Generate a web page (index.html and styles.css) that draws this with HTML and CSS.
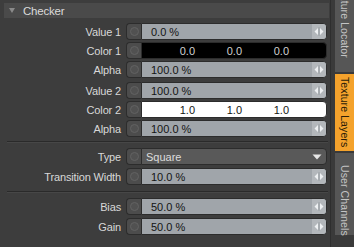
FILE: index.html
```html
<!DOCTYPE html>
<html>
<head>
<meta charset="utf-8">
<link rel="stylesheet" href="styles.css">
</head>
<body>
<div class="app">
  <div class="panel">
    <div class="header"><span class="tri"></span><span class="title">Checker</span></div>
    <div class="group">
      <div class="row"><div class="label">Value 1</div><div class="ctrl"><div class="key"><span class="dot"></span></div><div class="field"><span class="val">0.0 %</span><span class="arrows"><svg width="14" height="15" viewBox="0 0 14 15"><path d="M6 4 L2.5 7.5 L6 11 Z M8 4 L11.5 7.5 L8 11 Z" fill="#eef0f2"/><path d="M7 3 V12" stroke="#9aa0a5" stroke-width="1"/></svg></span></div></div></div>
      <div class="row"><div class="label">Color 1</div><div class="ctrl"><div class="key"><span class="dot"></span></div><div class="field color black"><span class="c">0.0</span><span class="c">0.0</span><span class="c">0.0</span></div></div></div>
      <div class="row"><div class="label">Alpha</div><div class="ctrl"><div class="key"><span class="dot"></span></div><div class="field"><span class="val">100.0 %</span><span class="arrows"><svg width="14" height="15" viewBox="0 0 14 15"><path d="M6 4 L2.5 7.5 L6 11 Z M8 4 L11.5 7.5 L8 11 Z" fill="#eef0f2"/><path d="M7 3 V12" stroke="#9aa0a5" stroke-width="1"/></svg></span></div></div></div>
    </div>
    <div class="group second">
      <div class="row"><div class="label">Value 2</div><div class="ctrl"><div class="key"><span class="dot"></span></div><div class="field"><span class="val">100.0 %</span><span class="arrows"><svg width="14" height="15" viewBox="0 0 14 15"><path d="M6 4 L2.5 7.5 L6 11 Z M8 4 L11.5 7.5 L8 11 Z" fill="#eef0f2"/><path d="M7 3 V12" stroke="#9aa0a5" stroke-width="1"/></svg></span></div></div></div>
      <div class="row"><div class="label">Color 2</div><div class="ctrl"><div class="key"><span class="dot"></span></div><div class="field color white"><span class="c">1.0</span><span class="c">1.0</span><span class="c">1.0</span></div></div></div>
      <div class="row"><div class="label">Alpha</div><div class="ctrl"><div class="key"><span class="dot"></span></div><div class="field"><span class="val">100.0 %</span><span class="arrows"><svg width="14" height="15" viewBox="0 0 14 15"><path d="M6 4 L2.5 7.5 L6 11 Z M8 4 L11.5 7.5 L8 11 Z" fill="#eef0f2"/><path d="M7 3 V12" stroke="#9aa0a5" stroke-width="1"/></svg></span></div></div></div>
    </div>
    <div class="sep"></div>
    <div class="group loose">
      <div class="row"><div class="label">Type</div><div class="ctrl"><div class="key"><span class="dot"></span></div><div class="field drop"><span class="val">Square</span><svg class="caret" width="10" height="6" viewBox="0 0 10 6"><path d="M0.5 0.5 H9.5 L5 5.5 Z" fill="#e6e6e6"/></svg></div></div></div>
      <div class="row"><div class="label">Transition Width</div><div class="ctrl"><div class="key"><span class="dot"></span></div><div class="field"><span class="val">10.0 %</span><span class="arrows"><svg width="14" height="15" viewBox="0 0 14 15"><path d="M6 4 L2.5 7.5 L6 11 Z M8 4 L11.5 7.5 L8 11 Z" fill="#eef0f2"/><path d="M7 3 V12" stroke="#9aa0a5" stroke-width="1"/></svg></span></div></div></div>
    </div>
    <div class="sep lower"></div>
    <div class="group loose">
      <div class="row"><div class="label">Bias</div><div class="ctrl"><div class="key"><span class="dot"></span></div><div class="field"><span class="val">50.0 %</span><span class="arrows"><svg width="14" height="15" viewBox="0 0 14 15"><path d="M6 4 L2.5 7.5 L6 11 Z M8 4 L11.5 7.5 L8 11 Z" fill="#eef0f2"/><path d="M7 3 V12" stroke="#9aa0a5" stroke-width="1"/></svg></span></div></div></div>
      <div class="row"><div class="label">Gain</div><div class="ctrl"><div class="key"><span class="dot"></span></div><div class="field"><span class="val">50.0 %</span><span class="arrows"><svg width="14" height="15" viewBox="0 0 14 15"><path d="M6 4 L2.5 7.5 L6 11 Z M8 4 L11.5 7.5 L8 11 Z" fill="#eef0f2"/><path d="M7 3 V12" stroke="#9aa0a5" stroke-width="1"/></svg></span></div></div></div>
    </div>
  </div>
  <div class="tabs">
    <div class="tab first">Texture Locator</div>
    <div class="tab active">Texture Layers</div>
    <div class="tab">User Channels</div>
  </div>
</div>
</body>
</html>
```
FILE: styles.css
```css
html, body {
  margin: 0;
  padding: 0;
  background: #3d3d3d;
}
body {
  width: 354px;
  height: 247px;
  overflow: hidden;
  font-family: "Liberation Sans", Arial, sans-serif;
  font-size: 11px;
}
.app {
  display: flex;
  width: 354px;
  height: 247px;
}
.panel {
  width: 330px;
  padding-top: 3px;
  box-sizing: border-box;
}
.header {
  height: 15px;
  margin-left: 4px;
  margin-right: 1px;
  background: #4a4a4a;
  display: flex;
  align-items: center;
  color: #dadada;
  font-size: 11.5px;
}
.tri {
  width: 0;
  height: 0;
  border-left: 3.5px solid transparent;
  border-right: 3.5px solid transparent;
  border-top: 5px solid #8a8a8a;
  margin-left: 5px;
  margin-right: 8px;
}
.title {
  letter-spacing: -0.2px;
}
.group {
  display: flex;
  flex-direction: column;
  gap: 2px;
  margin-top: 5px;
}
.group.second {
  margin-top: 4px;
}
.group.loose {
  gap: 3px;
}
.row {
  display: flex;
  height: 17px;
  align-items: center;
}
.label {
  width: 121px;
  padding-right: 5px;
  text-align: right;
  color: #d8d8d8;
  letter-spacing: -0.15px;
  white-space: nowrap;
}
.ctrl {
  display: flex;
  width: 201px;
  height: 17px;
}
.key {
  width: 15px;
  height: 17px;
  box-sizing: border-box;
  border: 1px solid #2c2c2c;
  border-right: none;
  border-radius: 4px 0 0 4px;
  background: #4c4c4c;
  display: flex;
  align-items: center;
  justify-content: center;
}
.dot {
  width: 9px;
  height: 9px;
  box-sizing: border-box;
  border-radius: 50%;
  border: 1px solid #626262;
  background: #515151;
}
.field {
  flex: 1;
  height: 17px;
  box-sizing: border-box;
  border: 1px solid #2c2c2c;
  border-radius: 0 4px 4px 0;
  background: #a0a5aa;
  display: flex;
  align-items: center;
  color: #141414;
  overflow: hidden;
}
.val {
  flex: 1;
  padding-left: 9px;
}
.arrows {
  width: 14px;
  height: 15px;
  background: #b3b7bb;
  display: flex;
}
.color {
  padding-left: 6px;
}
.color .c {
  width: 47px;
  text-align: right;
}
.black {
  background: #000;
  color: #d0d0d0;
}
.white {
  background: #fff;
  color: #141414;
}
.drop {
  background: #595959;
  color: #dcdcdc;
}
.drop .val {
  padding-left: 4px;
}
.caret {
  margin-right: 4px;
}
.sep {
  height: 1px;
  margin: 4px 2px 0 7px;
  background: #2a2a2a;
  border-bottom: 1px solid #474747;
}
.sep.lower {
  margin-top: 6px;
}
.tabs {
  width: 24px;
  display: flex;
  flex-direction: column;
  gap: 2px;
  background: #3a3a3a;
  padding-left: 4px;
  box-sizing: border-box;
  border-left: 1px solid #2e2e2e;
}
.tab {
  width: 20px;
  writing-mode: vertical-rl;
  background: #565656;
  color: #c4c4c4;
  font-size: 10.5px;
  letter-spacing: 0.1px;
  line-height: 20px;
  padding: 12px 0 12px 0;
  box-sizing: border-box;
  white-space: nowrap;
}
.tab.first {
  margin-top: -16px;
  height: 88px;
  padding-top: 0;
}
.tab.active {
  background: #f4a22c;
  color: #2a1c08;
  height: 77px;
  padding-top: 3px;
}
.tab:last-child {
  height: 82px;
}
```
